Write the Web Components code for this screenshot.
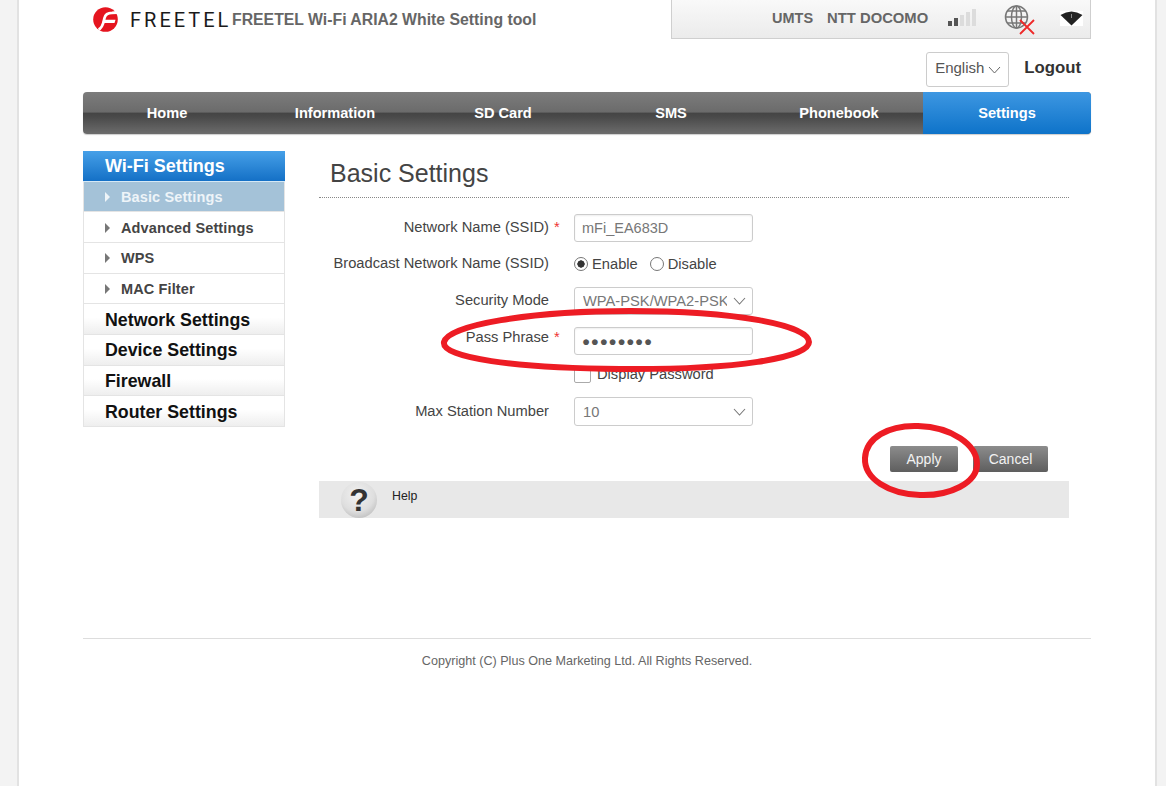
<!DOCTYPE html>
<html lang="en">
<head>
<meta charset="utf-8">
<title>FREETEL Wi-Fi ARIA2 White Setting tool</title>
<style>
  html, body { margin: 0; height: 786px; overflow: hidden; }
  body { background: #f3f3f3; font-family: "Liberation Sans", Arial, sans-serif; }
</style>
</head>
<body>
<frt-page>
  <frt-header></frt-header>
  <frt-nav></frt-nav>
  <frt-body>
    <frt-sidebar slot="side"></frt-sidebar>
    <frt-title>Basic Settings</frt-title>
    <frt-row label="Network Name (SSID)" required style="margin-top:16px"><frt-input value="mFi_EA683D"></frt-input></frt-row>
    <frt-row label="Broadcast Network Name (SSID)" style="margin-top:8px"><frt-radios></frt-radios></frt-row>
    <frt-row label="Security Mode" style="margin-top:9px"><frt-select value="WPA-PSK/WPA2-PSK"></frt-select></frt-row>
    <frt-row label="Pass Phrase" required lift="8" style="margin-top:12px"><frt-input value="●●●●●●●●" dots></frt-input></frt-row>
    <frt-row style="margin-top:11px;height:17px"><frt-check>Display Password</frt-check></frt-row>
    <frt-row label="Max Station Number" lift="1" style="margin-top:14px"><frt-select value="10" tall></frt-select></frt-row>
    <frt-actions></frt-actions>
    <frt-help></frt-help>
  </frt-body>
  <frt-footer></frt-footer>
</frt-page>
<frt-marks></frt-marks>

<script>
// Marco exterior de la pagina
class FrtPage extends HTMLElement {
  constructor() {
    super();
    this.attachShadow({ mode: 'open' });
    this.shadowRoot.innerHTML = `
      <style>
        :host {
          display: block;
          box-sizing: border-box;
          width: 1140px;
          height: 786px;
          margin-left: 17px;
          padding: 0 64px;
          background: #fff;
          border-left: 2px solid #e2e2e2;
          border-right: 2px solid #e2e2e2;
        }
      </style>
      <slot></slot>`;
  }
}

// Cabecera: logo, titulo, estado y selector de idioma
class FrtHeader extends HTMLElement {
  constructor() {
    super();
    this.attachShadow({ mode: 'open' });
    this.shadowRoot.innerHTML = `
      <style>
        :host { display: block; }
        .top { display: flex; height: 39px; align-items: flex-start; }
        .brand { display: flex; align-items: center; height: 39px; padding-left: 10px; }
        .mark { width: 25px; height: 25px; display: block; }
        .word {
          margin-left: 12px;
          width: 102px;
          font-family: Roboto, "Liberation Sans", sans-serif;
          font-size: 20px;
          letter-spacing: 3px;
          color: #1a1a1a;
          white-space: nowrap;
        }
        .name { font-size: 15.8px; font-weight: bold; color: #666; white-space: nowrap; }
        .status {
          margin-left: auto;
          box-sizing: border-box;
          width: 420px;
          height: 39px;
          display: flex;
          align-items: center;
          padding: 0 7px 2px 100px;
          background: linear-gradient(#f9f9f9, #ebebeb);
          border: 1px solid #cfcfcf;
          border-top: 0;
          font-size: 14.5px;
          font-weight: bold;
          color: #666;
          white-space: nowrap;
        }
        .status .op { margin-left: 14px; font-size: 14.8px; }
        .status svg { display: block; flex: none; }
        .bars { margin-left: 20px; }
        .globe { margin-left: 26px; }
        .wifi { margin-left: 24px; }
        .lang {
          display: flex;
          justify-content: flex-end;
          align-items: center;
          margin-top: 13px;
          height: 35px;
        }
        .sel {
          box-sizing: border-box;
          width: 83px;
          height: 35px;
          border: 1px solid #ccc;
          border-radius: 3px;
          display: flex;
          align-items: center;
          padding: 0 7px 4px 8px;
          justify-content: space-between;
          font-size: 15px;
          color: #555;
        }
        .sel svg { margin-top: 4px; }
        .logout { margin: 0 10px 4px 15px; font-size: 16.8px; font-weight: bold; color: #333; }
      </style>
      <div class="top">
        <div class="brand">
          <svg class="mark" viewBox="0 0 25 25">
            <circle cx="12.5" cy="12.5" r="12.3" fill="#e5151f"/>
            <path d="M5.5 22.5 C10 21 10.5 15 11.5 11 C12.3 7.5 15 5.8 19 5.8 L24 5.5" fill="none" stroke="#fff" stroke-width="2.8"/>
            <path d="M10 12.8 L22.5 12.8 L21.5 16 L9.6 16 Z" fill="#fff"/>
          </svg>
          <span class="word">FREETEL</span>
          <span class="name">FREETEL Wi-Fi ARIA2 White Setting tool</span>
        </div>
        <div class="status">
          <span>UMTS</span>
          <span class="op">NTT DOCOMO</span>
          <svg class="bars" width="30" height="20" viewBox="0 0 30 20">
            <rect x="0" y="13" width="4" height="5" fill="#555"/>
            <rect x="6" y="10" width="4" height="8" fill="#555"/>
            <rect x="12" y="7" width="4" height="11" fill="#dcdcdc"/>
            <rect x="18" y="4" width="4" height="14" fill="#dcdcdc"/>
            <rect x="24" y="1" width="4" height="17" fill="#dcdcdc"/>
          </svg>
          <svg class="globe" width="32" height="32" viewBox="0 0 30 32" style="margin-top:6px">
            <g fill="none" stroke="#777" stroke-width="1.5">
              <circle cx="11.5" cy="12" r="11"/>
              <ellipse cx="11.5" cy="12" rx="5" ry="11"/>
              <path d="M11.5 1 V23 M0.5 12 H22.5 M2.5 6 H20.5 M2.5 18 H20.5"/>
            </g>
            <path d="M15 15 L29 29 M29 15 L15 29" stroke="#ee2a2a" stroke-width="1.8"/>
          </svg>
          <svg class="wifi" width="23" height="15" viewBox="0 0 23 15">
            <rect width="23" height="15" fill="#fff"/>
            <path d="M0.5 4 Q11.5 -3 22.5 4 L11.5 14.5 Z" fill="#222"/>
            <rect x="11" y="3" width="1" height="4" fill="#888"/>
          </svg>
        </div>
      </div>
      <div class="lang">
        <div class="sel">
          <span>English</span>
          <svg width="13" height="8" viewBox="0 0 13 8"><path d="M1 1 L6.5 7 L12 1" fill="none" stroke="#666"/></svg>
        </div>
        <span class="logout">Logout</span>
      </div>`;
  }
}

// Barra de navegacion principal
class FrtNav extends HTMLElement {
  constructor() {
    super();
    this.attachShadow({ mode: 'open' });
    const tabs = ['Home', 'Information', 'SD Card', 'SMS', 'Phonebook', 'Settings'];
    this.shadowRoot.innerHTML = `
      <style>
        :host {
          display: grid;
          grid-template-columns: repeat(6, 1fr);
          height: 42px;
          margin-top: 5px;
          border-radius: 4px;
          overflow: hidden;
          background: linear-gradient(#7c7c7c 0, #6b6b6b 48%, #444 50%, #4a4a4a 60%, #6c6c6c 100%);
          box-shadow: 0 1px 1px #ccc;
        }
        div {
          display: flex;
          align-items: center;
          justify-content: center;
          font-size: 14.6px;
          font-weight: bold;
          color: #fff;
        }
        .on { background: linear-gradient(#3d97e2, #0e73c9); }
      </style>
      ${tabs.map((t) => `<div class="${t === 'Settings' ? 'on' : ''}">${t}</div>`).join('')}`;
  }
}

// Zona central: menu lateral a la izquierda y contenido a la derecha
class FrtBody extends HTMLElement {
  constructor() {
    super();
    this.attachShadow({ mode: 'open' });
    this.shadowRoot.innerHTML = `
      <style>
        :host {
          display: grid;
          grid-template-columns: 202px 750px;
          column-gap: 34px;
          margin-top: 17px;
          height: 367px;
        }
      </style>
      <div><slot name="side"></slot></div>
      <div><slot></slot></div>`;
  }
}

// Menu lateral
class FrtSidebar extends HTMLElement {
  constructor() {
    super();
    this.attachShadow({ mode: 'open' });
    const filas = [
      ['head', 'Wi-Fi Settings'],
      ['sub on', 'Basic Settings'],
      ['sub', 'Advanced Settings'],
      ['sub', 'WPS'],
      ['sub', 'MAC Filter'],
      ['top', 'Network Settings'],
      ['top', 'Device Settings'],
      ['top', 'Firewall'],
      ['top', 'Router Settings']
    ];
    this.shadowRoot.innerHTML = `
      <style>
        :host {
          display: grid;
          grid-auto-rows: 1fr;
          height: 276px;
          box-sizing: border-box;
          border: 1px solid #e4e4e4;
          border-top: 0;
          border-bottom: 0;
        }
        div {
          box-sizing: border-box;
          display: flex;
          align-items: center;
          font-weight: bold;
          border-bottom: 1px solid #e4e4e4;
          white-space: nowrap;
        }
        .head {
          margin: 0 -1px;
          padding: 2px 0 0 22px;
          font-size: 18px;
          color: #fff;
          background: linear-gradient(#46a0e8, #1470c6);
          border-bottom: 1px solid #d5e8f5;
        }
        .sub { padding: 1px 0 0 21px; font-size: 14.5px; color: #444; letter-spacing: .12px; }
        .sub::before {
          content: "";
          margin-right: 11px;
          border-left: 5px solid #777;
          border-top: 5px solid transparent;
          border-bottom: 5px solid transparent;
        }
        .on { background: #a4c2d8; color: #eef4f8; }
        .on::before { border-left-color: #eef4f8; }
        .top {
          padding: 2px 0 0 21px;
          font-size: 17.8px;
          color: #111;
          background: linear-gradient(#fff, #fff 45%, #eee);
        }
      </style>
      ${filas.map(([c, t]) => `<div class="${c}">${t}</div>`).join('')}`;
  }
}

// Titulo de la seccion con linea punteada
class FrtTitle extends HTMLElement {
  constructor() {
    super();
    this.attachShadow({ mode: 'open' });
    this.shadowRoot.innerHTML = `
      <style>
        :host {
          display: flex;
          align-items: center;
          box-sizing: border-box;
          height: 47px;
          padding: 0 0 2px 11px;
          font-size: 25px;
          color: #444;
          border-bottom: 1px dotted #888;
        }
      </style>
      <slot></slot>`;
  }
}

// Fila del formulario: etiqueta, asterisco y control
class FrtRow extends HTMLElement {
  constructor() {
    super();
    this.attachShadow({ mode: 'open' });
  }
  connectedCallback() {
    const label = this.getAttribute('label') || '';
    const req = this.hasAttribute('required');
    const lift = this.getAttribute('lift') || '2';
    this.shadowRoot.innerHTML = `
      <style>
        :host {
          display: grid;
          grid-template-columns: 230px 25px 1fr;
          align-items: center;
          font-size: 14.7px;
          color: #444;
          white-space: nowrap;
        }
        .l { text-align: right; padding-bottom: ${lift}px; }
        .r { color: #e33; padding: 0 0 ${lift}px 5px; }
      </style>
      <div class="l">${label}</div>
      <div class="r">${req ? '*' : ''}</div>
      <div><slot></slot></div>`;
  }
}

// Campo de texto
class FrtInput extends HTMLElement {
  constructor() {
    super();
    this.attachShadow({ mode: 'open' });
  }
  connectedCallback() {
    const dots = this.hasAttribute('dots');
    this.shadowRoot.innerHTML = `
      <style>
        :host {
          display: flex;
          align-items: center;
          box-sizing: border-box;
          width: 179px;
          height: 28px;
          padding: 0 7px;
          border: 1px solid #ccc;
          border-radius: 3px;
          box-shadow: inset 0 1px 2px #eee;
          font-size: ${dots ? '13.5px' : '14.5px'};
          letter-spacing: ${dots ? '0.7px' : '0'};
          color: ${dots ? '#555' : '#777'};
        }
      </style>
      ${this.getAttribute('value')}`;
  }
}

// Desplegable
class FrtSelect extends HTMLElement {
  constructor() {
    super();
    this.attachShadow({ mode: 'open' });
  }
  connectedCallback() {
    this.shadowRoot.innerHTML = `
      <style>
        :host {
          display: flex;
          align-items: center;
          box-sizing: border-box;
          width: 179px;
          height: ${this.hasAttribute('tall') ? 29 : 28}px;
          padding: 0 6px 0 8px;
          border: 1px solid #ccc;
          border-radius: 3px;
          font-size: 14.7px;
          color: #777;
        }
        span { flex: 1; overflow: hidden; white-space: nowrap; }
        svg { flex: none; margin-left: 6px; }
      </style>
      <span>${this.getAttribute('value')}</span>
      <svg width="13" height="8" viewBox="0 0 13 8"><path d="M1 1 L6.5 7 L12 1" fill="none" stroke="#777" stroke-width="1.1"/></svg>`;
  }
}

// Enable / Disable
class FrtRadios extends HTMLElement {
  constructor() {
    super();
    this.attachShadow({ mode: 'open' });
    this.shadowRoot.innerHTML = `
      <style>
        :host { display: flex; align-items: center; height: 28px; font-size: 14.7px; color: #444; }
        i {
          box-sizing: border-box;
          width: 14px;
          height: 14px;
          margin-right: 4px;
          border: 1px solid #777;
          border-radius: 50%;
          background: #fff;
        }
        i.on { background: radial-gradient(circle, #333 0 3.4px, #fff 3.9px); }
        span { margin-bottom: 1px; }
        span + i { margin-left: 12px; }
      </style>
      <i class="on"></i><span>Enable</span><i></i><span>Disable</span>`;
  }
}

// Casilla de verificacion
class FrtCheck extends HTMLElement {
  constructor() {
    super();
    this.attachShadow({ mode: 'open' });
    this.shadowRoot.innerHTML = `
      <style>
        :host { display: flex; align-items: center; height: 17px; font-size: 14.7px; color: #444; }
        i {
          box-sizing: border-box;
          width: 17px;
          height: 17px;
          margin-right: 6px;
          border: 1px solid #aaa;
          border-radius: 2px;
          background: #fff;
        }
        span { margin-bottom: 2px; }
      </style>
      <i></i><span><slot></slot></span>`;
  }
}

// Botones Apply y Cancel
class FrtActions extends HTMLElement {
  constructor() {
    super();
    this.attachShadow({ mode: 'open' });
    this.shadowRoot.innerHTML = `
      <style>
        :host {
          display: flex;
          justify-content: flex-end;
          gap: 15px;
          margin-top: 20px;
          padding-right: 21px;
        }
        div {
          width: 68px;
          height: 26px;
          display: flex;
          align-items: center;
          justify-content: center;
          border-radius: 2px;
          font-size: 14px;
          color: #f2f2f2;
          background: linear-gradient(#8c8c8c, #5e5e5e);
        }
        div + div { width: 75px; }
      </style>
      <div>Apply</div><div>Cancel</div>`;
  }
}

// Barra de ayuda
class FrtHelp extends HTMLElement {
  constructor() {
    super();
    this.attachShadow({ mode: 'open' });
    this.shadowRoot.innerHTML = `
      <style>
        :host {
          display: flex;
          align-items: flex-start;
          height: 37px;
          margin-top: 9px;
          padding-left: 22px;
          background: #e8e8e8;
          font-size: 12.3px;
          color: #222;
        }
        .q {
          box-sizing: border-box;
          width: 36px;
          height: 36px;
          margin-top: 1px;
          border-radius: 50%;
          background: radial-gradient(circle at 45% 35%, #f2f2f2 0, #dedede 55%, #aaa 100%);
          display: flex;
          align-items: center;
          justify-content: center;
          font-size: 32px;
          font-weight: bold;
          color: #333;
        }
        .t { margin: 8px 0 0 15px; }
      </style>
      <div class="q">?</div><div class="t">Help</div>`;
  }
}

// Pie de pagina
class FrtFooter extends HTMLElement {
  constructor() {
    super();
    this.attachShadow({ mode: 'open' });
    this.shadowRoot.innerHTML = `
      <style>
        :host {
          display: block;
          margin-top: 120px;
          padding-top: 15px;
          border-top: 1px solid #ddd;
          font-size: 12.6px;
          color: #666;
          text-align: center;
        }
      </style>
      Copyright (C) Plus One Marketing Ltd. All Rights Reserved.`;
  }
}

// Marcas rojas dibujadas a mano encima de la captura
class FrtMarks extends HTMLElement {
  constructor() {
    super();
    this.attachShadow({ mode: 'open' });
    this.shadowRoot.innerHTML = `
      <style>
        :host { position: absolute; left: 0; top: 0; width: 1166px; height: 786px; pointer-events: none; }
        svg { display: block; }
      </style>
      <svg width="1166" height="786" viewBox="0 0 1166 786" fill="none" stroke="#ed1c24" stroke-width="6">
        <path d="M444 342 C448 325 530 311 630 311 C735 311 809 325 809 342 C809 358 735 370 620 369 C515 368 441 358 444 342 Z"/>
        <path d="M865 458 C866 438 888 425 918 426 C952 427 977 445 977 464 C977 483 950 496 920 495 C889 494 864 479 865 458 Z"/>
      </svg>`;
  }
}

customElements.define('frt-page', FrtPage);
customElements.define('frt-header', FrtHeader);
customElements.define('frt-nav', FrtNav);
customElements.define('frt-body', FrtBody);
customElements.define('frt-sidebar', FrtSidebar);
customElements.define('frt-title', FrtTitle);
customElements.define('frt-row', FrtRow);
customElements.define('frt-input', FrtInput);
customElements.define('frt-select', FrtSelect);
customElements.define('frt-radios', FrtRadios);
customElements.define('frt-check', FrtCheck);
customElements.define('frt-actions', FrtActions);
customElements.define('frt-help', FrtHelp);
customElements.define('frt-footer', FrtFooter);
customElements.define('frt-marks', FrtMarks);
</script>
</body>
</html>
